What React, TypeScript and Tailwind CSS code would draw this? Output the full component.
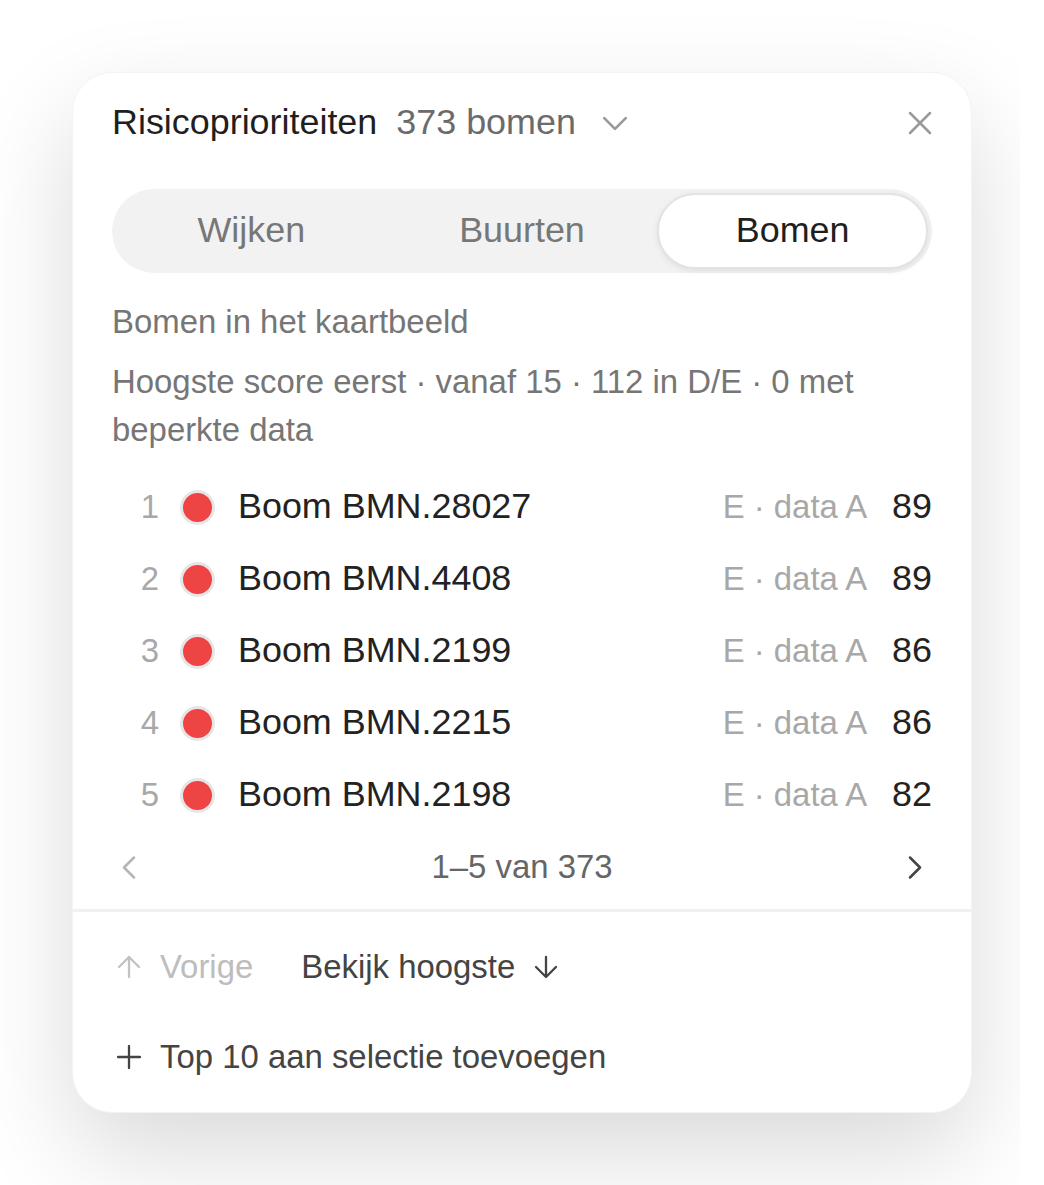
import React from "react";

const rows = [
  { n: 1, name: "Boom BMN.28027", score: 89 },
  { n: 2, name: "Boom BMN.4408", score: 89 },
  { n: 3, name: "Boom BMN.2199", score: 86 },
  { n: 4, name: "Boom BMN.2215", score: 86 },
  { n: 5, name: "Boom BMN.2198", score: 82 },
];

function Icon({ d, w, h, vb, sw, cls }: { d: string; w: number; h: number; vb: string; sw: number; cls: string }) {
  return (
    <svg width={w} height={h} viewBox={vb} fill="none" stroke="currentColor" strokeWidth={sw} strokeLinecap="round" strokeLinejoin="round" className={cls}>
      <path d={d} />
    </svg>
  );
}

export default function App() {
  return (
    <div className="w-[1020px] h-[1185px] overflow-hidden bg-white pt-[72px] pl-[72px]" style={{ fontFamily: '"Liberation Sans", Arial, sans-serif' }}>
      <div className="w-[900px] bg-white rounded-[40px] border border-[#f3f3f3] shadow-[0_40px_100px_rgba(0,0,0,0.15)] px-[39px] pt-[27px] pb-[27px]">
        {/* header */}
        <div className="h-[46px] flex items-center">
          <span className="text-[35.9px] text-[#1f1f1f] leading-none">Risicoprioriteiten</span>
          <span className="ml-[19px] text-[35.9px] text-[#6b6b6b] leading-none">373 bomen</span>
          <Icon d="M2 2 L12 12 L22 2" w={26} h={15} vb="0 0 24 14" sw={2.5} cls="ml-[26px] text-[#9a9a9a]" />
          <div className="flex-1" />
          <Icon d="M2 2 L22 22 M22 2 L2 22" w={24} h={24} vb="0 0 24 24" sw={2.5} cls="text-[#9a9a9a]" />
        </div>

        {/* tabs */}
        <div className="mt-[43px] h-[84px] rounded-full bg-[#f2f2f2] p-[4px] grid grid-cols-3">
          <div className="flex items-center justify-center text-[35.9px] text-[#777]">Wijken</div>
          <div className="flex items-center justify-center text-[35.9px] text-[#777]">Buurten</div>
          <div className="flex items-center justify-center text-[35.9px] text-[#1f1f1f] bg-white rounded-full border-2 border-[#e3e3e3] shadow-[0_2px_6px_rgba(0,0,0,0.08)]">Bomen</div>
        </div>

        <div className="mt-[25px] text-[32.9px] leading-[48px] text-[#767676]">Bomen in het kaartbeeld</div>
        <div className="mt-[12px] text-[32.9px] leading-[48px] text-[#767676]">
          Hoogste score eerst · vanaf 15 · 112 in D/E · 0 met beperkte data
        </div>

        {/* rows */}
        <div className="mt-[17px]">
          {rows.map((r) => (
            <div key={r.n} className="h-[72px] flex items-center">
              <span className="w-[20px] ml-[28px] text-center text-[32.9px] text-[#a8a8a8]">{r.n}</span>
              <span className="ml-[20px] w-[35px] h-[35px] rounded-full bg-[#ef4444] border-[3px] border-[#e6e6e6] box-border" />
              <span className="ml-[23px] text-[35.9px] text-[#222]">{r.name}</span>
              <span className="flex-1" />
              <span className="text-[32.9px] text-[#a8a8a8]">E · data A</span>
              <span className="ml-[25px] text-[35.9px] text-[#222]">{r.score}</span>
            </div>
          ))}
        </div>

        {/* pagination */}
        <div className="h-[72px] flex items-center justify-between">
          <Icon d="M12 2 L2 12 L12 22" w={14} h={25} vb="0 0 14 24" sw={2.5} cls="ml-[10px] text-[#b5b5b5]" />
          <span className="text-[32.9px] text-[#666]">1–5 van 373</span>
          <Icon d="M2 2 L12 12 L2 22" w={14} h={25} vb="0 0 14 24" sw={2.5} cls="mr-[10px] text-[#444]" />
        </div>

        <div className="-mx-[39px] mt-[6px] h-[3px] bg-[#f0f0f0]" />

        {/* footer */}
        <div className="mt-[27px] h-[56px] flex items-center">
          <Icon d="M12 22 V2 M2 12 L12 2 L22 12" w={24} h={24} vb="0 0 24 24" sw={2.3} cls="ml-[5px] text-[#c2c2c2]" />
          <span className="ml-[19px] text-[32.9px] text-[#bdbdbd]">Vorige</span>
          <span className="ml-[48px] text-[32.9px] text-[#444]">Bekijk hoogste</span>
          <Icon d="M12 2 V22 M2 12 L12 22 L22 12" w={24} h={24} vb="0 0 24 24" sw={2.3} cls="ml-[19px] text-[#444]" />
        </div>
        <div className="mt-[34px] h-[56px] flex items-center">
          <Icon d="M12 1 V23 M1 12 H23" w={24} h={24} vb="0 0 24 24" sw={2.3} cls="ml-[5px] text-[#444]" />
          <span className="ml-[19px] text-[32.9px] text-[#444]">Top 10 aan selectie toevoegen</span>
        </div>
      </div>
    </div>
  );
}
